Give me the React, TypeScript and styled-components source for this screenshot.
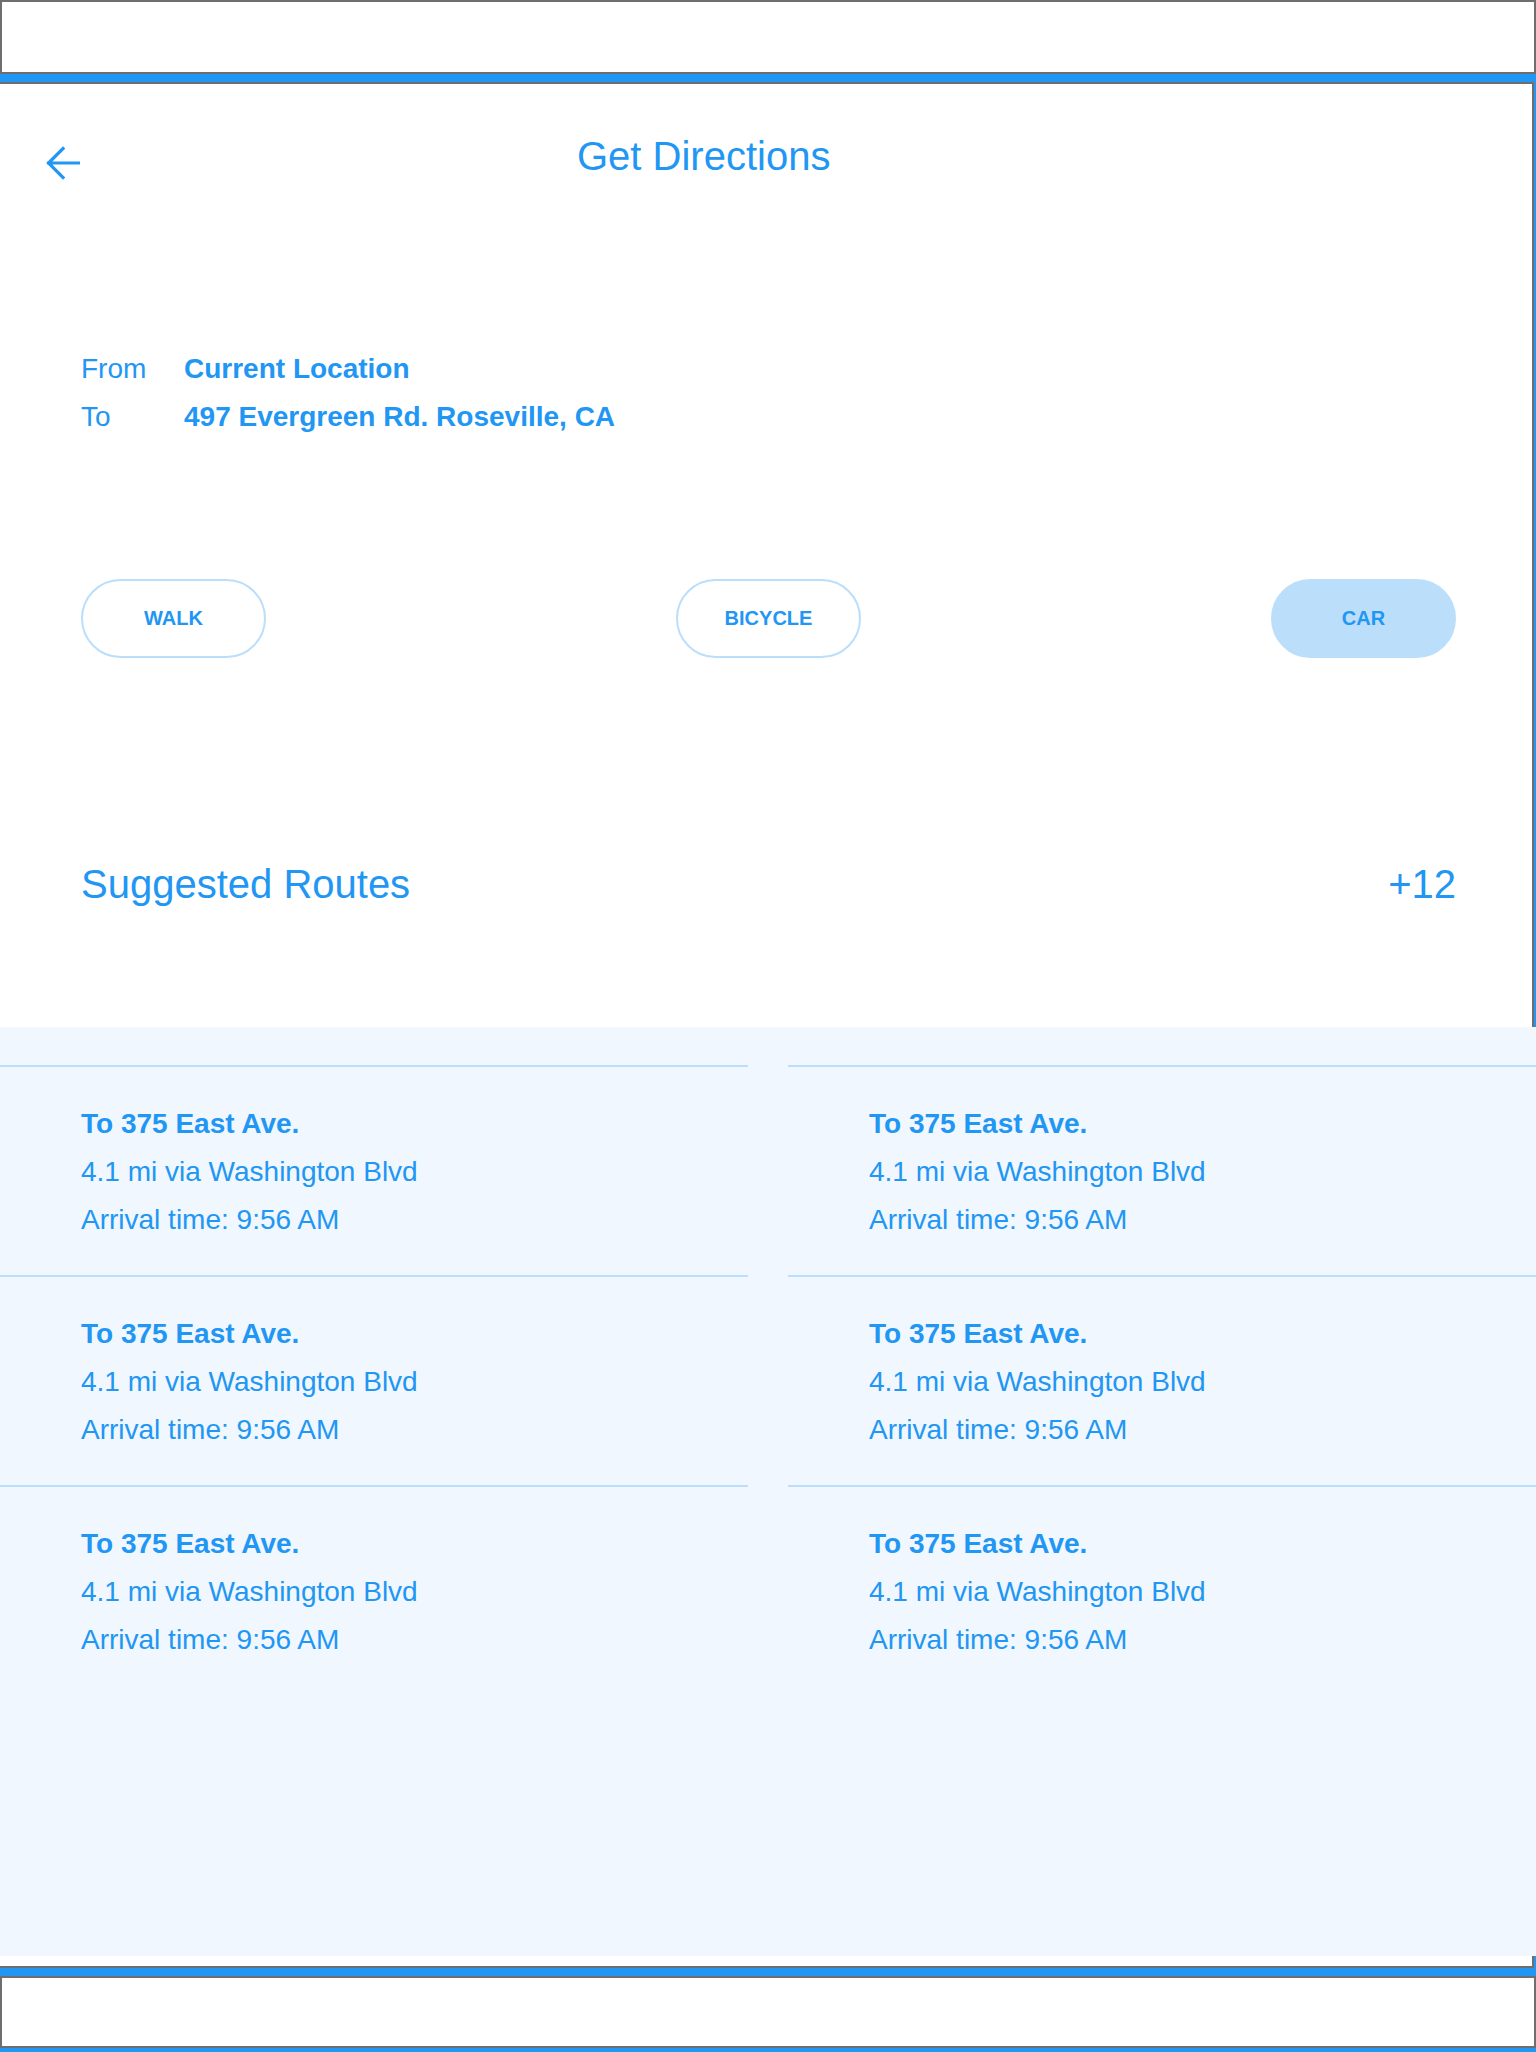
import styled, { createGlobalStyle } from "styled-components";

const BLUE = "#2196f3";
const LIGHT = "#bbdefb";
const GRAY = "#6e6e6e";

const GlobalStyle = createGlobalStyle`
  html, body {
    margin: 0;
    padding: 0;
  }
  body {
    background: ${BLUE};
    font-family: "Liberation Sans", Arial, sans-serif;
    color: ${BLUE};
    overflow-x: hidden;
  }
  * {
    box-sizing: border-box;
  }
`;

const routes = [1, 2, 3, 4, 5, 6].map((id) => ({
  id,
  title: "To 375 East Ave.",
  distance: "4.1 mi via Washington Blvd",
  arrival: "Arrival time: 9:56 AM",
}));

const modes = [
  { label: "WALK", active: false },
  { label: "BICYCLE", active: false },
  { label: "CAR", active: true },
];

const BackArrow = () => (
  <svg width="34" height="34" viewBox="0 0 34 34" fill="none">
    <path
      d="M33 17H2.5M17 2.5L2.5 17L17 31.5"
      stroke={BLUE}
      strokeWidth="3.2"
      strokeLinecap="square"
    />
  </svg>
);

const App = () => {
  return (
    <>
      <GlobalStyle />
      <Bar />
      <Main>
        <Header>
          <BackButton aria-label="Back">
            <BackArrow />
          </BackButton>
          <Title>Get Directions</Title>
        </Header>

        <Trip>
          <TripRow>
            <TripLabel>From</TripLabel>
            <TripValue>Current Location</TripValue>
          </TripRow>
          <TripRow>
            <TripLabel>To</TripLabel>
            <TripValue>497 Evergreen Rd. Roseville, CA</TripValue>
          </TripRow>
        </Trip>

        <Modes>
          {modes.map((m) => (
            <ModeButton key={m.label} $active={m.active}>
              {m.label}
            </ModeButton>
          ))}
        </Modes>

        <SectionHead>
          <SectionTitle>Suggested Routes</SectionTitle>
          <SectionCount>+12</SectionCount>
        </SectionHead>

        <RoutesPanel>
          {routes.map((r) => (
            <RouteCard key={r.id}>
              <RouteTitle>{r.title}</RouteTitle>
              <RouteLine>{r.distance}</RouteLine>
              <RouteLine>{r.arrival}</RouteLine>
            </RouteCard>
          ))}
        </RoutesPanel>
      </Main>
      <Bar $bottom />
    </>
  );
};

export default App;

const Bar = styled.div<{ $bottom?: boolean }>`
  width: 1536px;
  height: ${(p) => (p.$bottom ? "72px" : "74px")};
  background: #fff;
  border: 2px solid ${GRAY};
  margin-bottom: 8px;
`;

const Main = styled.main`
  width: 1536px;
  margin-left: -2px;
  height: 1886px;
  margin-bottom: 8px;
  background: #fff;
  border: 2px solid ${GRAY};
  display: flex;
  flex-direction: column;
`;

const Header = styled.header`
  display: flex;
  align-items: flex-start;
  padding: 49px 0 0 46px;
`;

const BackButton = styled.button`
  border: none;
  background: none;
  padding: 0;
  margin-top: 13px;
  width: 34px;
  height: 34px;
  cursor: pointer;
  display: flex;
`;

const Title = styled.h1`
  margin: 0 0 0 497px;
  font-size: 40px;
  font-weight: 400;
  line-height: 46px;
`;

const Trip = styled.div`
  display: flex;
  flex-direction: column;
  padding: 0 75px 0 81px;
  margin-top: 165px;
`;

const TripRow = styled.div`
  display: flex;
  font-size: 28px;
  line-height: 48px;
`;

const TripLabel = styled.span`
  width: 103px;
`;

const TripValue = styled.span`
  font-weight: 700;
`;

const Modes = styled.div`
  display: flex;
  justify-content: space-between;
  padding: 0 76px 0 81px;
  margin-top: 138px;
`;

const ModeButton = styled.button<{ $active?: boolean }>`
  width: 185px;
  height: 79px;
  border-radius: 40px;
  border: 2px solid ${LIGHT};
  background: ${(p) => (p.$active ? LIGHT : "#fff")};
  color: ${BLUE};
  font-family: "Liberation Sans", Arial, sans-serif;
  font-size: 20px;
  font-weight: 700;
  cursor: pointer;
`;

const SectionHead = styled.div`
  display: flex;
  justify-content: space-between;
  align-items: baseline;
  padding: 0 76px 0 81px;
  margin-top: 203px;
`;

const SectionTitle = styled.h2`
  margin: 0;
  font-size: 40px;
  font-weight: 400;
  line-height: 46px;
`;

const SectionCount = styled.span`
  font-size: 40px;
  line-height: 46px;
`;

const RoutesPanel = styled.section`
  width: 1536px;
  margin-top: 120px;
  background: #f0f7fe;
  padding: 38px 0 261px;
  display: grid;
  grid-template-columns: 1fr 1fr;
  column-gap: 40px;
`;

const RouteCard = styled.article`
  border-top: 2px solid ${LIGHT};
  padding: 33px 0 31px 81px;
`;

const RouteTitle = styled.div`
  font-size: 28px;
  line-height: 48px;
  font-weight: 700;
`;

const RouteLine = styled.div`
  font-size: 28px;
  line-height: 48px;
`;
